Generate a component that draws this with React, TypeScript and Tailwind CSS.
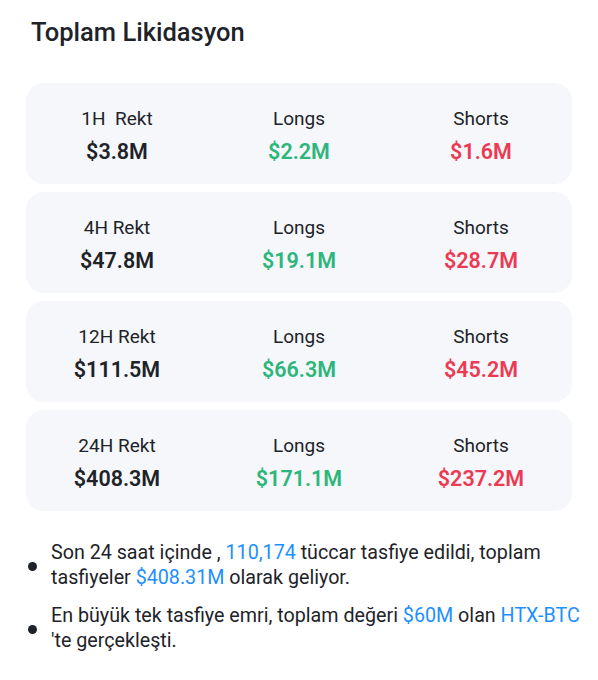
const rows = [
  { label: '1H  Rekt', total: '$3.8M', longs: '$2.2M', shorts: '$1.6M' },
  { label: '4H Rekt', total: '$47.8M', longs: '$19.1M', shorts: '$28.7M' },
  { label: '12H Rekt', total: '$111.5M', longs: '$66.3M', shorts: '$45.2M' },
  { label: '24H Rekt', total: '$408.3M', longs: '$171.1M', shorts: '$237.2M' },
];

const Stat = ({ label, value, color }: { label: string; value: string; color: string }) => (
  <div className="flex flex-col items-center">
    <span className="text-[19px] leading-[26px] text-[#1e2329] whitespace-pre">{label}</span>
    <span className={`text-[21.5px] leading-[30px] font-semibold mt-[5px] ${color}`}>{value}</span>
  </div>
);

const App = () => {
  return (
    <div
      className="w-[598px] h-[680px] bg-white text-[#1e2329]"
      style={{ fontFamily: 'Roboto, "Noto Sans", sans-serif' }}
    >
      <h1 className="pl-[31px] pt-[16px] text-[25.5px] leading-[32px] font-medium">Toplam Likidasyon</h1>

      <div className="flex flex-col gap-[8px] mx-[26px] mt-[35px]">
        {rows.map((r) => (
          <div key={r.label} className="grid grid-cols-3 bg-[#f5f7fa] rounded-[18px] h-[101px] items-center pt-[6px]">
            <Stat label={r.label} value={r.total} color="text-[#1e2329]" />
            <Stat label="Longs" value={r.longs} color="text-[#2db67c]" />
            <Stat label="Shorts" value={r.shorts} color="text-[#ec3a55]" />
          </div>
        ))}
      </div>

      <ul className="mt-[29px] pl-[28px] flex flex-col gap-[13px] text-[19.7px] leading-[25px]">
        <li className="flex items-center gap-[14px]">
          <span className="w-[9px] h-[9px] rounded-full bg-[#1e2329] shrink-0 mt-[2px]" />
          <p className="whitespace-nowrap">
            Son 24 saat içinde , <span className="text-[#1e8fff]">110,174</span> tüccar tasfiye edildi, toplam
            <br />
            tasfiyeler <span className="text-[#1e8fff]">$408.31M</span> olarak geliyor.
          </p>
        </li>
        <li className="flex items-center gap-[14px]">
          <span className="w-[9px] h-[9px] rounded-full bg-[#1e2329] shrink-0 mt-[2px]" />
          <p className="whitespace-nowrap">
            En büyük tek tasfiye emri, toplam değeri <span className="text-[#1e8fff]">$60M</span> olan{' '}
            <span className="text-[#1e8fff]">HTX-BTC</span>
            <br />
            'te gerçekleşti.
          </p>
        </li>
      </ul>
    </div>
  );
};

export default App;
